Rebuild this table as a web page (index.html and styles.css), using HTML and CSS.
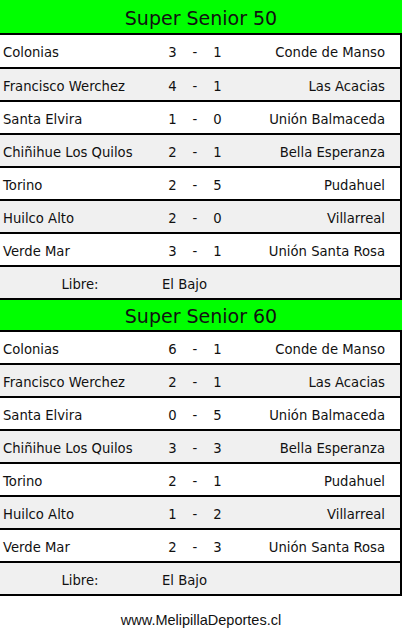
FILE: index.html
```html
<!DOCTYPE html>
<html lang="es">
<head>
<meta charset="utf-8">
<title>Super Senior</title>
<link rel="stylesheet" href="styles.css">
</head>
<body>
<div class="page">
  <section class="block first">
    <h2 class="title">Super Senior 50</h2>
    <div class="row"><span class="home">Colonias</span><span class="sc">3</span><span class="dash">-</span><span class="sc">1</span><span class="away">Conde de Manso</span></div>
    <div class="row alt"><span class="home">Francisco Werchez</span><span class="sc">4</span><span class="dash">-</span><span class="sc">1</span><span class="away">Las Acacias</span></div>
    <div class="row"><span class="home">Santa Elvira</span><span class="sc">1</span><span class="dash">-</span><span class="sc">0</span><span class="away">Unión Balmaceda</span></div>
    <div class="row alt"><span class="home">Chiñihue Los Quilos</span><span class="sc">2</span><span class="dash">-</span><span class="sc">1</span><span class="away">Bella Esperanza</span></div>
    <div class="row"><span class="home">Torino</span><span class="sc">2</span><span class="dash">-</span><span class="sc">5</span><span class="away">Pudahuel</span></div>
    <div class="row alt"><span class="home">Huilco Alto</span><span class="sc">2</span><span class="dash">-</span><span class="sc">0</span><span class="away">Villarreal</span></div>
    <div class="row"><span class="home">Verde Mar</span><span class="sc">3</span><span class="dash">-</span><span class="sc">1</span><span class="away">Unión Santa Rosa</span></div>
    <div class="row alt libre"><span class="lab">Libre:</span><span class="free">El Bajo</span></div>
  </section>
  <section class="block second">
    <h2 class="title">Super Senior 60</h2>
    <div class="row"><span class="home">Colonias</span><span class="sc">6</span><span class="dash">-</span><span class="sc">1</span><span class="away">Conde de Manso</span></div>
    <div class="row alt"><span class="home">Francisco Werchez</span><span class="sc">2</span><span class="dash">-</span><span class="sc">1</span><span class="away">Las Acacias</span></div>
    <div class="row"><span class="home">Santa Elvira</span><span class="sc">0</span><span class="dash">-</span><span class="sc">5</span><span class="away">Unión Balmaceda</span></div>
    <div class="row alt"><span class="home">Chiñihue Los Quilos</span><span class="sc">3</span><span class="dash">-</span><span class="sc">3</span><span class="away">Bella Esperanza</span></div>
    <div class="row"><span class="home">Torino</span><span class="sc">2</span><span class="dash">-</span><span class="sc">1</span><span class="away">Pudahuel</span></div>
    <div class="row alt"><span class="home">Huilco Alto</span><span class="sc">1</span><span class="dash">-</span><span class="sc">2</span><span class="away">Villarreal</span></div>
    <div class="row"><span class="home">Verde Mar</span><span class="sc">2</span><span class="dash">-</span><span class="sc">3</span><span class="away">Unión Santa Rosa</span></div>
    <div class="row alt libre"><span class="lab">Libre:</span><span class="free">El Bajo</span></div>
  </section>
  <p class="footer">www.MelipillaDeportes.cl</p>
</div>
</body>
</html>
```
FILE: styles.css
```css
html, body {
  margin: 0;
  padding: 0;
  background: #ffffff;
}
.page {
  width: 402px;
  font-family: "DejaVu Sans", Verdana, sans-serif;
  color: #111;
}
.block {
  display: flex;
  flex-direction: column;
}
.title {
  margin: 0;
  background: #00ff00;
  border-bottom: 2px solid #000;
  font-weight: normal;
  font-size: 19px;
  text-align: center;
  color: #111;
  box-sizing: border-box;
}
.first .title {
  height: 35px;
  padding-top: 7px;
  line-height: 22px;
}
.second .title {
  height: 32px;
  padding-top: 5px;
  line-height: 22px;
}
.row {
  display: grid;
  grid-template-columns: 160px 25px 20px 25px 1fr;
  align-items: center;
  height: 33px;
  box-sizing: border-box;
  border-right: 2px solid #000;
  border-bottom: 2px solid #000;
  background: #fff;
  font-size: 13.2px;
  padding-top: 3px;
}
.first .row:nth-of-type(1) {
  height: 34px;
}
.row.alt {
  background: #f0f0f0;
}
.home {
  padding-left: 3px;
  white-space: nowrap;
}
.sc, .dash {
  text-align: center;
}
.away {
  text-align: right;
  padding-right: 15px;
  white-space: nowrap;
}
.libre {
  grid-template-columns: 160px 1fr;
}
.lab {
  text-align: center;
}
.free {
  padding-left: 2px;
}
.footer {
  margin: 0;
  padding-top: 16px;
  text-align: center;
  font-family: "Liberation Sans", Arial, sans-serif;
  font-size: 14.5px;
  color: #111;
}
```
